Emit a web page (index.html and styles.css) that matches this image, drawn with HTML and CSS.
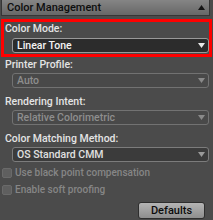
FILE: index.html
```html
<!DOCTYPE html>
<html>
<head>
<meta charset="utf-8">
<link rel="stylesheet" href="styles.css">
</head>
<body>
<div class="panel">
  <div class="header">
    <span class="title">Color Management</span>
    <svg class="tri" width="7" height="5" viewBox="0 0 7 5"><path d="M0 5 L3.5 0 L7 5 Z" fill="#151515"/></svg>
  </div>
  <div class="group highlight">
    <div class="label">Color Mode:</div>
    <div class="select active"><span>Linear Tone</span><svg class="arrow" width="7" height="5" viewBox="0 0 7 5"><path d="M0 0 L7 0 L3.5 5 Z" fill="#e8e8e8"/></svg></div>
  </div>
  <div class="group">
    <div class="label">Printer Profile:</div>
    <div class="select disabled"><span>Auto</span><svg class="arrow" width="7" height="5" viewBox="0 0 7 5"><path d="M0 0 L7 0 L3.5 5 Z" fill="#8a8a8a"/></svg></div>
  </div>
  <div class="group">
    <div class="label">Rendering Intent:</div>
    <div class="select disabled"><span>Relative Colorimetric</span><svg class="arrow" width="7" height="5" viewBox="0 0 7 5"><path d="M0 0 L7 0 L3.5 5 Z" fill="#8a8a8a"/></svg></div>
  </div>
  <div class="group">
    <div class="label">Color Matching Method:</div>
    <div class="select normal"><span>OS Standard CMM</span><svg class="arrow" width="7" height="5" viewBox="0 0 7 5"><path d="M0 0 L7 0 L3.5 5 Z" fill="#9a9a9a"/></svg></div>
  </div>
  <div class="checks">
    <div class="check"><span class="box"></span><span>Use black point compensation</span></div>
    <div class="check"><span class="box"></span><span>Enable soft proofing</span></div>
  </div>
  <div class="actions"><button class="btn">Defaults</button></div>
</div>
</body>
</html>
```
FILE: styles.css
```css
html, body {
  margin: 0;
  padding: 0;
  background: #4b4b4b;
}
body {
  width: 213px;
  height: 220px;
  overflow: hidden;
  font-family: Roboto, "Liberation Sans", Arial, sans-serif;
  font-size: 11px;
}
.panel {
  display: flex;
  flex-direction: column;
}
.header {
  height: 16px;
  box-sizing: border-box;
  margin: 0 3px 0 1px;
  border: 1px solid #363636;
  border-top: none;
  background: linear-gradient(#858585, #676767);
  display: flex;
  align-items: center;
  justify-content: space-between;
  padding: 0 4px 0 5px;
  color: #0e0e0e;
}
.title {
  line-height: 15px;
  font-weight: 500;
}
.group {
  display: flex;
  flex-direction: column;
  padding: 0 4px 0 5px;
  margin-top: 7px;
}
.highlight {
  margin: 3px 1px 0 1px;
  border: 3px solid #ff0000;
  padding: 0 0 1px 1px;
}
.label {
  line-height: 14px;
  height: 14px;
  font-size: 10.5px;
  font-weight: 500;
  color: #e4e4e4;
}
.select {
  margin: 1px 0 0 7px;
  height: 15px;
  box-sizing: border-box;
  border-radius: 3px;
  display: flex;
  align-items: center;
  justify-content: space-between;
  padding: 0 3px 0 4px;
  font-size: 10.5px;
  font-weight: 500;
}
.highlight .select {
  margin-top: 2px;
}
.select span {
  line-height: 13px;
}
.active {
  background: #2c2c2c;
  border: 1px solid #999999;
  color: #f4f4f4;
}
.disabled {
  background: #494949;
  border: 1px solid #727272;
  color: #8e8e8e;
}
.normal {
  background: #3b3b3b;
  border: 1px solid #7c7c7c;
  color: #e0e0e0;
}
.group:nth-child(3) {
  margin-top: 1px;
}
.checks {
  margin-top: 2px;
  display: flex;
  flex-direction: column;
}
.check {
  height: 17px;
  display: flex;
  align-items: center;
  gap: 3px;
  padding-left: 2px;
  font-size: 10px;
  font-weight: 500;
  color: #868686;
}
.box {
  width: 10px;
  height: 10px;
  box-sizing: border-box;
  border-radius: 2px;
  background: #5f5f5f;
  border: 1px solid #6a6a6a;
}
.actions {
  display: flex;
  justify-content: flex-end;
  margin-top: 4px;
  padding-right: 8px;
}
.btn {
  width: 67px;
  height: 17px;
  margin: 0;
  padding: 0;
  box-sizing: border-box;
  border: 1px solid #2e2e2e;
  border-radius: 3px;
  background: linear-gradient(#b4b4b4, #8e8e8e);
  color: #0c0c0c;
  font-family: Roboto, "Liberation Sans", Arial, sans-serif;
  font-size: 11px;
  font-weight: 500;
  line-height: 15px;
}
```
